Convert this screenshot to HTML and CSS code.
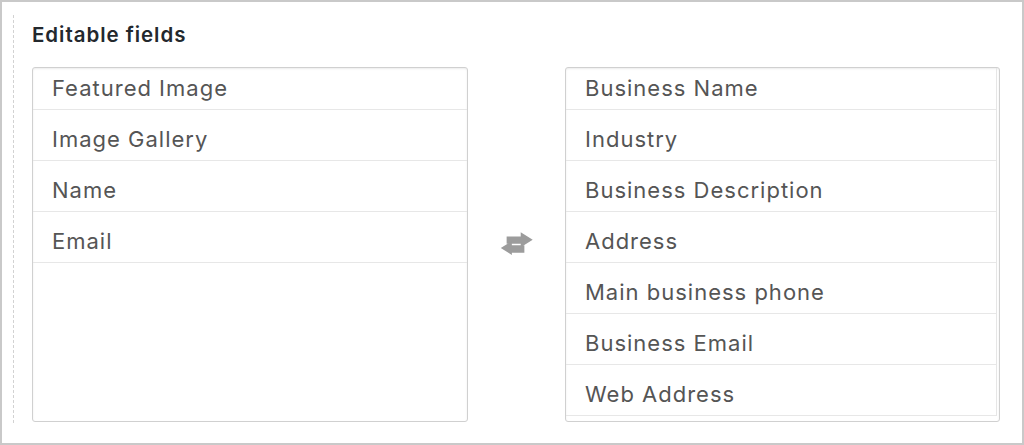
FILE: index.html
```html
<!DOCTYPE html>
<html lang="en">
<head>
<meta charset="utf-8">
<title>Editable fields</title>
<link rel="stylesheet" href="styles.css">
</head>
<body>
<div class="frame">
  <section class="section">
    <h2 class="heading">Editable fields</h2>
    <div class="columns">
      <div class="box">
        <ul class="list">
          <li class="row">Featured Image</li>
          <li class="row">Image Gallery</li>
          <li class="row">Name</li>
          <li class="row">Email</li>
        </ul>
      </div>
      <div class="swap">
        <svg class="swap-icon" viewBox="0 0 35 23" width="37" height="24" aria-hidden="true">
          <path fill="currentColor" d="M9 5.2h13.5V1.2L34 8.4 22.5 15.6v-3.3H9z"/>
          <path fill="currentColor" d="M26 13.6H14V9.6L3.4 16.4 14 23v-2.2h12z"/>
        </svg>
      </div>
      <div class="box box-scroll">
        <ul class="list list-scroll">
          <li class="row">Business Name</li>
          <li class="row">Industry</li>
          <li class="row">Business Description</li>
          <li class="row">Address</li>
          <li class="row">Main business phone</li>
          <li class="row">Business Email</li>
          <li class="row">Web Address</li>
        </ul>
      </div>
    </div>
  </section>
</div>
</body>
</html>
```

FILE: styles.css
```css
* { box-sizing: border-box; }

html, body {
  margin: 0;
  padding: 0;
  background: #ffffff;
}

body {
  font-family: Inter, "Liberation Sans", sans-serif;
  color: #555555;
}

.frame {
  width: 1024px;
  height: 445px;
  border: 2px solid #c9c9c9;
  background: #ffffff;
  padding: 13px 22px 0 11px;
}

.section {
  height: 408px;
  border-left: 1px dashed #d2d2d2;
  padding-left: 18px;
}

.heading {
  margin: 0;
  padding-top: 8px;
  font-size: 20.5px;
  line-height: 24px;
  font-weight: 600;
  letter-spacing: 0.95px;
  color: #23282d;
}

.columns {
  display: flex;
  margin-top: 20px;
}

.box {
  width: 436px;
  height: 355px;
  border: 1px solid #d0d0d0;
  border-radius: 3px;
  box-shadow: inset 0 1px 2px rgba(0, 0, 0, 0.08);
  overflow: hidden;
}

.box-scroll {
  width: 435px;
}

.swap {
  width: 97px;
  display: flex;
  align-items: center;
  justify-content: center;
  color: #9c9c9c;
}

.swap-icon {
  display: block;
  margin-top: -3px;
  margin-right: 3px;
}

.list {
  list-style: none;
  margin: -9px 0 0 0;
  padding: 0;
}

.list-scroll {
  margin-right: 2px;
  border-right: 1px solid #e6e6e6;
}

.row {
  height: 51px;
  padding: 16px 18px 0 19px;
  font-size: 22px;
  line-height: 27px;
  letter-spacing: 1px;
  border-bottom: 1px solid #e7e7e7;
  white-space: nowrap;
}
```
